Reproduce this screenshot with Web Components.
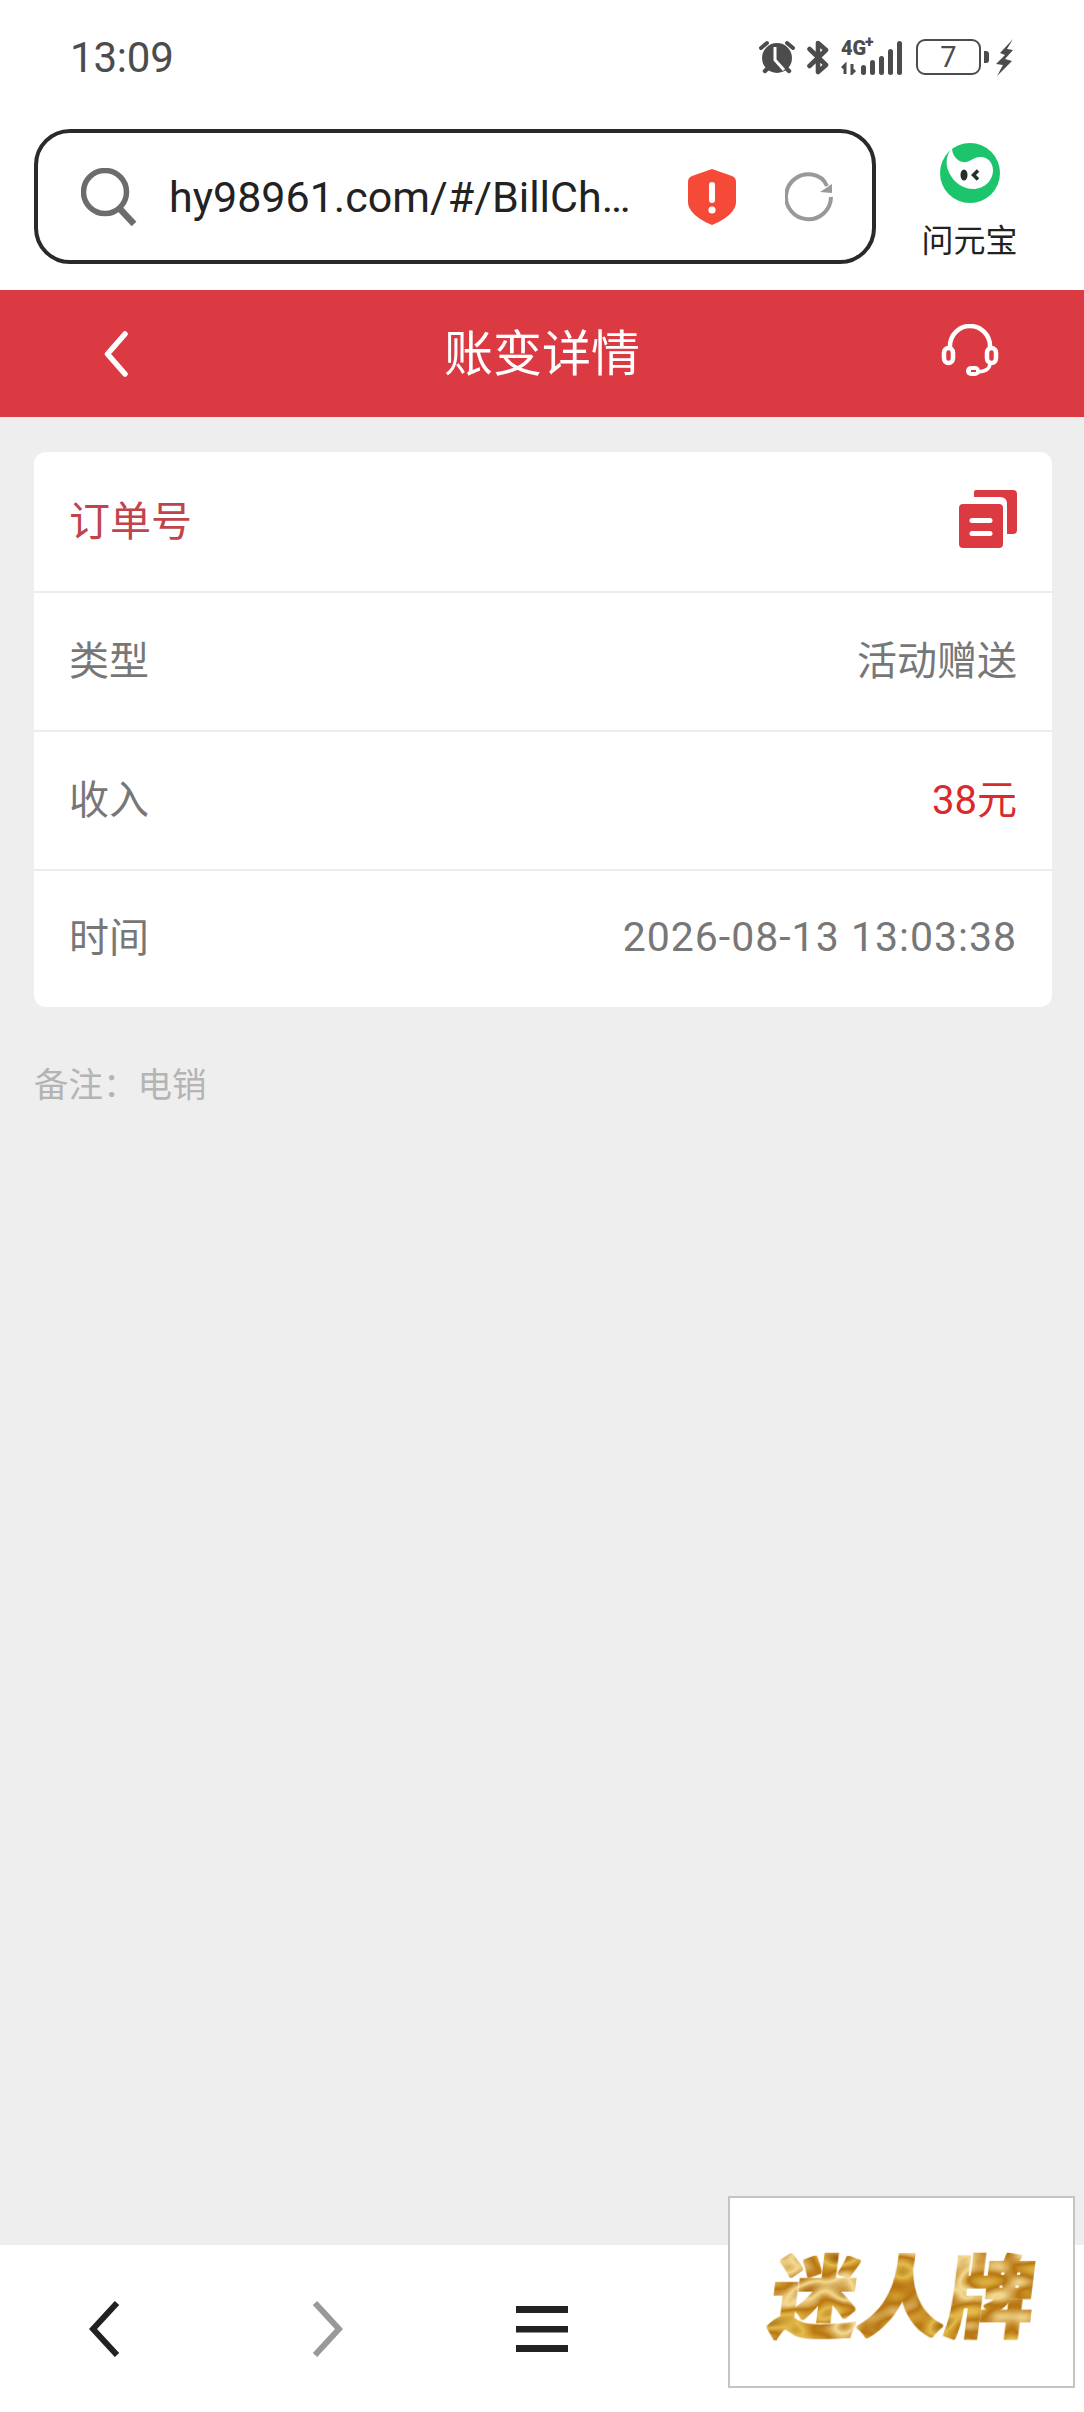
<!DOCTYPE html>
<html lang="zh-CN">
<head>
<meta charset="utf-8">
<title>账变详情</title>
<style>
    html, body { margin: 0; padding: 0; }
    body {
        width: 1084px;
        height: 2412px;
        overflow: hidden;
        font-family: Roboto, "Noto Sans CJK SC", sans-serif;
    }
    app-shell { --red: #dc3a43; }
</style>
</head>
<body>
<app-shell>
    <status-bar time="13:09" battery="7"></status-bar>
    <browser-bar url="hy98961.com/#/BillCh…" assistant="问元宝"></browser-bar>
    <page-header>账变详情</page-header>
    <page-body>
        <detail-card>
            <detail-row accent="title"><span slot="label">订单号</span><copy-icon></copy-icon></detail-row>
            <detail-row><span slot="label">类型</span>活动赠送</detail-row>
            <detail-row accent="money"><span slot="label">收入</span>38元</detail-row>
            <detail-row accent="time" last><span slot="label">时间</span>2026-08-13 13:03:38</detail-row>
        </detail-card>
        <bill-note>备注：电销</bill-note>
    </page-body>
    <bottom-nav></bottom-nav>
    <brand-badge>迷人牌</brand-badge>
</app-shell>

<script>
class AppShell extends HTMLElement {
    constructor() {
        super();
        this.attachShadow({ mode: "open" }).innerHTML = `
            <style>
                :host {
                    position: relative;
                    display: flex;
                    flex-direction: column;
                    height: 2412px;
                    background: #fff;
                }
            </style>
            <slot></slot>
        `;
    }
}

class StatusBar extends HTMLElement {
    connectedCallback() {
        const root = this.shadowRoot || this.attachShadow({ mode: "open" });
        root.innerHTML = `
            <style>
                :host {
                    display: flex;
                    align-items: center;
                    justify-content: space-between;
                    height: 114px;
                    padding: 0 71px 0 70px;
                    color: #4c4c4c;
                }
                .time { font-size: 42px; letter-spacing: -0.2px; }
                .icons { display: flex; align-items: center; }
                svg { display: block; }
                .net { position: relative; width: 62px; height: 36px; margin: 0 13px 0 12px; }
                .net b {
                    position: absolute;
                    left: 0;
                    top: -2px;
                    font: 900 20px/22px Roboto, sans-serif;
                }
                .net sup {
                    position: absolute;
                    left: 24px;
                    top: -5px;
                    font: 900 16px/16px Roboto, sans-serif;
                }
                .battery {
                    box-sizing: border-box;
                    display: flex;
                    align-items: center;
                    justify-content: center;
                    width: 65px;
                    height: 36px;
                    border: 2.5px solid #4c4c4c;
                    border-radius: 9px;
                    font-size: 29px;
                    line-height: 1;
                }
                .nub { width: 5px; height: 12px; margin: 0 7px 0 3px; border-radius: 0 3px 3px 0; background: #4c4c4c; }
            </style>
            <span class="time">${this.getAttribute("time")}</span>
            <div class="icons">
                <svg width="36" height="34" viewBox="0 0 36 34">
                    <path d="M2 8 L8 3 M34 8 L28 3" stroke="#4c4c4c" stroke-width="4" stroke-linecap="round"/>
                    <circle cx="18" cy="18" r="15" fill="#4c4c4c"/>
                    <path d="M6 31 L9 28 M30 31 L27 28" stroke="#4c4c4c" stroke-width="4.5" stroke-linecap="round"/>
                    <path d="M16 7 V20 L25 30" fill="none" stroke="#fff" stroke-width="3"/>
                </svg>
                <svg width="22" height="36" viewBox="0 0 22 36" style="margin-left:12px">
                    <path d="M2.5 10 L19 26 L11 33 V4 L19 11 L2.5 27" fill="none" stroke="#4c4c4c" stroke-width="4.6" stroke-linejoin="round" stroke-linecap="round"/>
                </svg>
                <div class="net">
                    <b>4G</b><sup>+</sup>
                    <svg width="62" height="36" viewBox="0 0 62 36">
                        <path d="M4 35 V26 L1 29 M11 25 V34 L14 31" stroke="#4c4c4c" stroke-width="3" fill="none"/>
                        <rect x="20" y="26" width="5" height="10" rx="2.5" fill="#4c4c4c"/>
                        <rect x="29" y="21" width="5" height="15" rx="2.5" fill="#4c4c4c"/>
                        <rect x="38" y="17" width="5" height="19" rx="2.5" fill="#4c4c4c"/>
                        <rect x="47" y="10" width="5" height="26" rx="2.5" fill="#4c4c4c"/>
                        <rect x="56" y="2" width="5" height="34" rx="2.5" fill="#4c4c4c"/>
                    </svg>
                </div>
                <div class="battery">${this.getAttribute("battery")}</div>
                <div class="nub"></div>
                <svg width="17" height="37" viewBox="0 0 17 37">
                    <path d="M17 0 L4 14 L9 16 L0 25 L7 26 L1 37 L16 22 L9 20 L17 11 L11 10 Z" fill="#4c4c4c"/>
                </svg>
            </div>
        `;
    }
}

class BrowserBar extends HTMLElement {
    connectedCallback() {
        const root = this.shadowRoot || this.attachShadow({ mode: "open" });
        root.innerHTML = `
            <style>
                :host {
                    display: flex;
                    align-items: stretch;
                    padding: 15px 0 26px 34px;
                }
                .address {
                    box-sizing: border-box;
                    display: flex;
                    align-items: center;
                    width: 842px;
                    height: 135px;
                    padding: 0 39px 0 43px;
                    border: 4.5px solid #2a2a2a;
                    border-radius: 36px;
                }
                svg { display: block; flex: none; }
                .url {
                    flex: 1;
                    margin-left: 32px;
                    color: #222;
                    font-size: 43px;
                    white-space: nowrap;
                }
                .shield { margin-right: 49.5px; }
                .assistant {
                    display: flex;
                    flex-direction: column;
                    align-items: center;
                    width: 187px;
                    padding-top: 14px;
                    color: #222;
                    font-size: 32px;
                    line-height: 44px;
                }
                .assistant span { margin-top: 16px; }
            </style>
            <div class="address">
                <svg width="56" height="58" viewBox="0 0 56 58">
                    <circle cx="24" cy="24" r="21.5" fill="none" stroke="#6c6c6c" stroke-width="5.5"/>
                    <path d="M39 41 L53 56" stroke="#6c6c6c" stroke-width="6.5"/>
                </svg>
                <span class="url">${this.getAttribute("url")}</span>
                <svg class="shield" width="48" height="56" viewBox="0 0 48 56">
                    <path d="M24 0 L44 7 Q48 8.5 48 13 V33 C48 43 36 51 24 56 C12 51 0 43 0 33 V13 Q0 8.5 4 7 Z" fill="#f44a37"/>
                    <rect x="21" y="13" width="6" height="21" rx="3" fill="#fff"/>
                    <circle cx="24" cy="41" r="3.6" fill="#fff"/>
                </svg>
                <svg width="48" height="50" viewBox="0 0 48 50">
                    <path d="M46 25 A22.5 22.5 0 1 1 27 2.5 C34 3.5 39 7 42 14" fill="none" stroke="#999" stroke-width="4"/>
                    <path d="M35 20 L47 21 L47 12 Z" fill="#999"/>
                </svg>
            </div>
            <div class="assistant">
                <svg width="60" height="60" viewBox="0 0 60 60">
                    <circle cx="30" cy="30" r="30" fill="#1cc56b"/>
                    <path d="M12 5 C5 13 5 24 11 33 C17 43 27 46 33 46 C45 46 53 37 53 27 C53 19 47 13 39 14 C32 15 29 20 23 19 C17 18 12 12 12 5Z" fill="#fff"/>
                    <ellipse cx="24" cy="32" rx="3.5" ry="5.5" fill="#26302b"/>
                    <path d="M38 27.5 L33.5 32 L38 36.5" fill="none" stroke="#26302b" stroke-width="3.5"/>
                </svg>
                <span>${this.getAttribute("assistant")}</span>
            </div>
        `;
    }
}

class PageHeader extends HTMLElement {
    constructor() {
        super();
        this.attachShadow({ mode: "open" }).innerHTML = `
            <style>
                :host {
                    display: grid;
                    grid-template-columns: 1fr auto 1fr;
                    align-items: center;
                    height: 127px;
                    background: var(--red);
                    color: #fff;
                    font-size: 49px;
                }
                .title { padding-bottom: 8px; }
                .left { padding-left: 104px; }
                .right { justify-self: end; padding: 0 84px 4px 0; }
                svg { display: block; }
            </style>
            <div class="left">
                <svg width="24" height="46" viewBox="0 0 24 46">
                    <path d="M21 3 L3.5 23 L21 43" fill="none" stroke="#fff" stroke-width="5.5" stroke-linecap="round" stroke-linejoin="round"/>
                </svg>
            </div>
            <span class="title"><slot></slot></span>
            <div class="right">
                <svg width="59" height="56" viewBox="0 0 59 56">
                    <path d="M9 24 V22 A20 20 0 0 1 49 22 V24" fill="none" stroke="#fff" stroke-width="4.5"/>
                    <rect x="3" y="24" width="9" height="15" rx="4.5" fill="none" stroke="#fff" stroke-width="4.5"/>
                    <rect x="46" y="24" width="9" height="15" rx="4.5" fill="none" stroke="#fff" stroke-width="4.5"/>
                    <path d="M49 40 C48 46 44 47 38 48" fill="none" stroke="#fff" stroke-width="3.5"/>
                    <rect x="25" y="42" width="14" height="10" rx="5" fill="#fff"/>
                    <rect x="30" y="46" width="5" height="2" fill="#dc3a43"/>
                </svg>
            </div>
        `;
    }
}

class PageBody extends HTMLElement {
    constructor() {
        super();
        this.attachShadow({ mode: "open" }).innerHTML = `
            <style>
                :host {
                    display: block;
                    flex: 1;
                    padding: 35px 32px 0 34px;
                    background: #eeeeee;
                }
            </style>
            <slot></slot>
        `;
    }
}

class DetailCard extends HTMLElement {
    constructor() {
        super();
        this.attachShadow({ mode: "open" }).innerHTML = `
            <style>
                :host {
                    display: block;
                    overflow: hidden;
                    border-radius: 12px;
                    background: #fff;
                }
            </style>
            <slot></slot>
        `;
    }
}

class DetailRow extends HTMLElement {
    constructor() {
        super();
        this.attachShadow({ mode: "open" }).innerHTML = `
            <style>
                :host {
                    box-sizing: border-box;
                    display: flex;
                    align-items: center;
                    justify-content: space-between;
                    height: 139px;
                    padding: 0 35px 5px;
                    border-bottom: 2px solid #ececec;
                    color: #777;
                    font-size: 40px;
                }
                :host([accent="title"]) { height: 141px; font-size: 41px; }
                :host([last]) { height: 136px; border-bottom: none; }
                :host([accent="title"]) .label { color: #c1444c; }
                :host([accent="money"]) .value { color: #d92b2b; }
                :host([accent="time"]) .value { margin-bottom: 0; font-size: 41px; letter-spacing: 1px; }
                :host([accent="title"]) .value { margin-bottom: 0; }
                .label, .value { margin-bottom: 3px; }
                .value { display: flex; align-items: center; }
            </style>
            <span class="label"><slot name="label"></slot></span>
            <span class="value"><slot></slot></span>
        `;
    }
}

class CopyIcon extends HTMLElement {
    constructor() {
        super();
        this.attachShadow({ mode: "open" }).innerHTML = `
            <style>
                :host { display: block; width: 58px; height: 58px; }
                svg { display: block; }
            </style>
            <svg width="58" height="58" viewBox="0 0 58 58">
                <path d="M17 0 H54 Q58 0 58 4 V40 Q58 44 54 44 H48 V14 Q48 7 41 7 H15 V2 Q15 0 17 0Z" fill="#dc3a43"/>
                <rect x="0" y="14" width="44" height="44" rx="4" fill="#dc3a43"/>
                <rect x="10.5" y="28" width="23" height="5" rx="2.5" fill="#fff"/>
                <rect x="10.5" y="41" width="23" height="5" rx="2.5" fill="#fff"/>
            </svg>
        `;
    }
}

class BillNote extends HTMLElement {
    constructor() {
        super();
        this.attachShadow({ mode: "open" }).innerHTML = `
            <style>
                :host {
                    display: block;
                    margin-top: 55px;
                    color: #b4b4b4;
                    font-size: 34.5px;
                    line-height: 46px;
                }
            </style>
            <slot></slot>
        `;
    }
}

class BottomNav extends HTMLElement {
    constructor() {
        super();
        this.attachShadow({ mode: "open" }).innerHTML = `
            <style>
                :host {
                    display: grid;
                    grid-template-columns: repeat(5, 1fr);
                    place-items: center;
                    height: 167px;
                    background: #fff;
                }
                svg { display: block; }
                .back { margin-right: 6px; }
                .forward { margin-left: 4px; }
            </style>
            <svg class="back" width="32" height="56" viewBox="0 0 32 56">
                <path d="M28 2 L4 28 L28 54" fill="none" stroke="#222" stroke-width="6"/>
            </svg>
            <svg class="forward" width="32" height="56" viewBox="0 0 32 56">
                <path d="M4 2 L28 28 L4 54" fill="none" stroke="#999" stroke-width="6"/>
            </svg>
            <svg width="52" height="46" viewBox="0 0 52 46">
                <rect y="0" width="52" height="7" fill="#222"/>
                <rect y="20" width="52" height="6.5" fill="#222"/>
                <rect y="39" width="52" height="7" fill="#222"/>
            </svg>
        `;
    }
}

class BrandBadge extends HTMLElement {
    constructor() {
        super();
        this.attachShadow({ mode: "open" }).innerHTML = `
            <style>
                :host {
                    position: absolute;
                    left: 728px;
                    top: 2196px;
                    box-sizing: border-box;
                    display: flex;
                    align-items: center;
                    justify-content: center;
                    width: 347px;
                    height: 192px;
                    padding: 0 0 2px 6px;
                    border: 2px solid #c4c4c4;
                    background: #fff;
                }
                .mark {
                    transform: skewX(-7deg);
                    font: 900 88px/1 "Noto Sans CJK SC", sans-serif;
                    color: #c08a20;
                    filter: url(#marble);
                }
                svg { position: absolute; width: 0; height: 0; }
            </style>
            <svg aria-hidden="true">
                <filter id="marble" x="-5%" y="-5%" width="110%" height="110%" color-interpolation-filters="sRGB">
                    <feMorphology in="SourceAlpha" operator="dilate" radius="1" result="fat"/>
                    <feTurbulence type="fractalNoise" baseFrequency="0.02 0.035" numOctaves="2" seed="11"/>
                    <feColorMatrix values="1 0 0 0 0  1 0 0 0 0  1 0 0 0 0  0 0 0 0 1"/>
                    <feComponentTransfer>
                        <feFuncR type="table" tableValues="0.55 0.62 0.9 0.72 0.96 0.68 0.86"/>
                        <feFuncG type="table" tableValues="0.34 0.38 0.74 0.46 0.86 0.42 0.62"/>
                        <feFuncB type="table" tableValues="0.04 0.04 0.3 0.06 0.58 0.05 0.14"/>
                    </feComponentTransfer>
                    <feComposite in2="fat" operator="in"/>
                </filter>
            </svg>
            <span class="mark"><slot></slot></span>
        `;
    }
}

customElements.define("app-shell", AppShell);
customElements.define("status-bar", StatusBar);
customElements.define("browser-bar", BrowserBar);
customElements.define("page-header", PageHeader);
customElements.define("page-body", PageBody);
customElements.define("detail-card", DetailCard);
customElements.define("detail-row", DetailRow);
customElements.define("copy-icon", CopyIcon);
customElements.define("bill-note", BillNote);
customElements.define("bottom-nav", BottomNav);
customElements.define("brand-badge", BrandBadge);
</script>
</body>
</html>
